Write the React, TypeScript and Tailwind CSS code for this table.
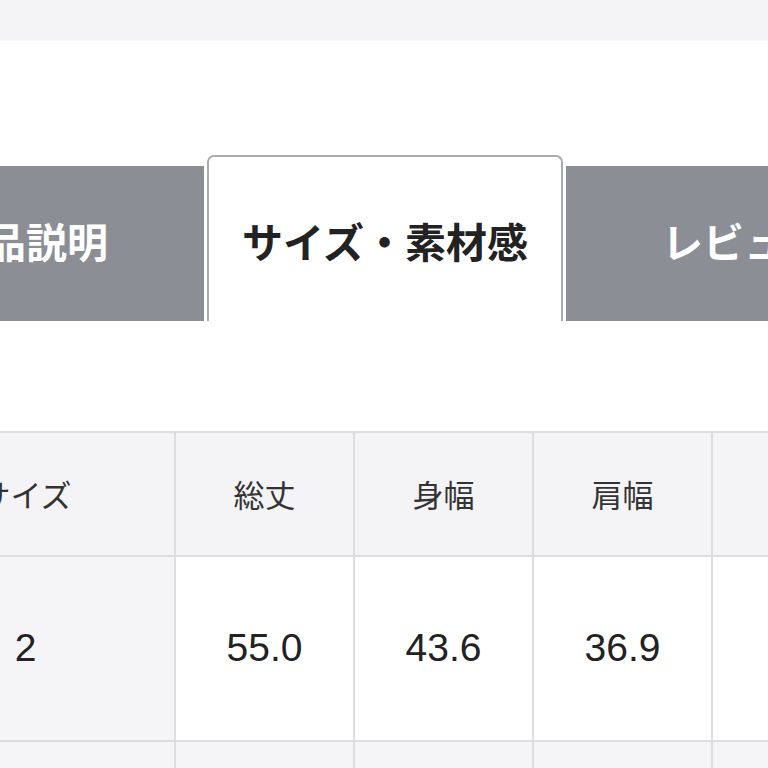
const jp = { fontFamily: '"Noto Sans CJK JP", "Noto Sans", sans-serif' };
const num = { fontFamily: '"Liberation Sans", Arial, sans-serif' };

const heads = ['サイズ', '総丈', '身幅', '肩幅', '袖丈'];
const values = ['2', '55.0', '43.6', '36.9', ''];

export default function App() {
  return (
    <div className="w-[768px] h-[768px] overflow-hidden bg-white">
      {/* top band */}
      <div className="h-[41px] bg-[#f4f4f6]" />

      {/* tabs */}
      <div className="mt-[114px] ml-[-152px] flex items-end gap-[3px]" style={jp}>
        <div className="w-[356px] h-[155px] shrink-0 bg-[#8b8e95] pb-[6px] flex items-center justify-center text-[41px] font-bold text-white">
          商品説明
        </div>
        <div className="w-[356px] h-[166px] shrink-0 bg-white border-2 border-b-0 border-[#ababab] rounded-t-[7px] pt-[3px] flex items-center justify-center text-[41px] font-bold text-[#222]">
          サイズ・素材感
        </div>
        <div className="w-[356px] h-[155px] shrink-0 bg-[#8b8e95] pb-[6px] flex items-center justify-center text-[41px] font-bold text-white">
          レビュー
        </div>
      </div>

      {/* size table */}
      <div className="mt-[110px] ml-[-125px] w-[1024px] bg-[#dcdde0] pt-[2px] pl-[2px]">
        <div className="grid grid-cols-[297px_177px_177px_177px_177px] grid-rows-[122px_183px_60px] gap-[2px]">
          {heads.map((h) => (
            <div key={h} className="bg-[#f4f4f6] flex items-center justify-center text-[31px] text-[#333]" style={jp}>
              {h}
            </div>
          ))}
          {values.map((v, i) => (
            <div
              key={i}
              className={`${i === 0 ? 'bg-[#f5f5f7]' : 'bg-white'} flex items-center justify-center text-[39px] text-[#222]`}
              style={num}
            >
              {v}
            </div>
          ))}
          {heads.map((h) => (
            <div key={'r3' + h} className="bg-[#f5f5f7]" />
          ))}
        </div>
      </div>
    </div>
  );
}
